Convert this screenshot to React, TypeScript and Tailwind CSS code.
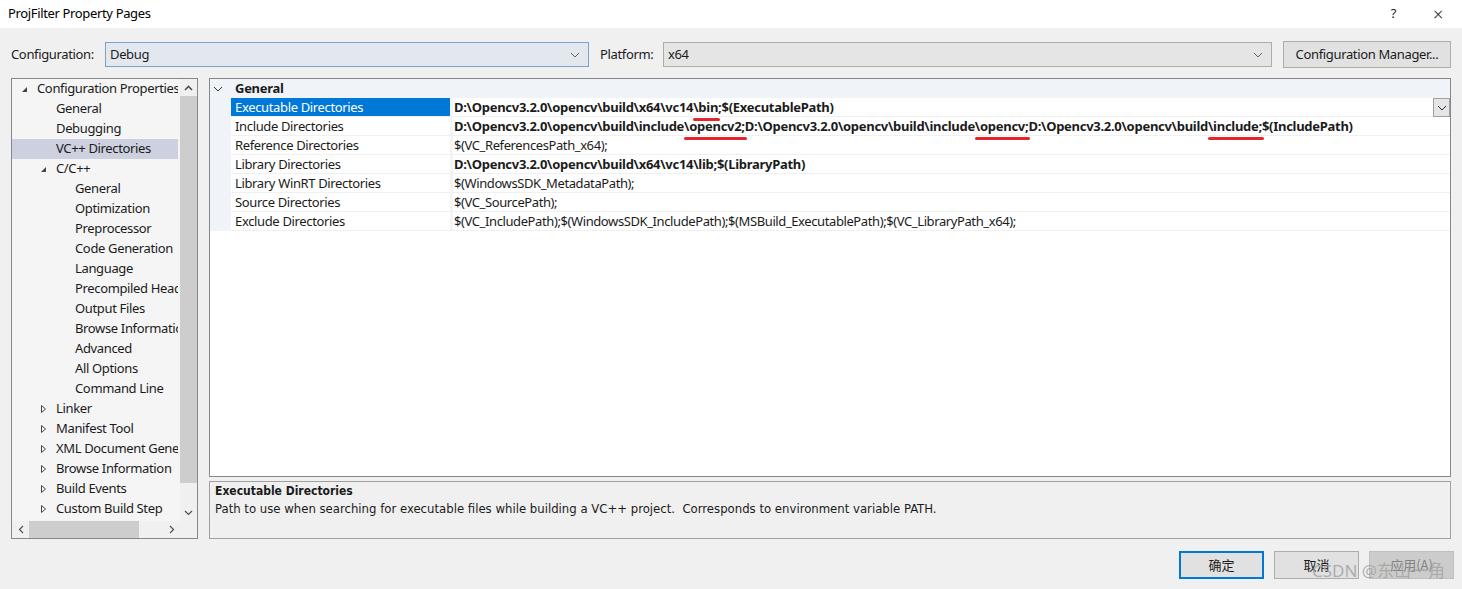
import React from "react";

const FONT = "font-['Noto_Sans','Segoe_UI',sans-serif]";

function Chevron({ className = "" }: { className?: string }) {
  return (
    <svg width="10" height="6" viewBox="0 0 10 6" className={className}>
      <path d="M1 1 L5 5 L9 1" fill="none" stroke="currentColor" strokeWidth="1" />
    </svg>
  );
}

function Expanded() {
  return (
    <svg width="7" height="7" viewBox="0 0 7 7">
      <path d="M6 1 L6 6 L1 6 Z" fill="#444" />
    </svg>
  );
}

function Collapsed() {
  return (
    <svg width="7" height="10" viewBox="0 0 7 10">
      <path d="M1.5 1.5 L5.5 5 L1.5 8.5 Z" fill="none" stroke="#444" strokeWidth="1" />
    </svg>
  );
}

type TreeItem = { label: string; level: number; state?: "open" | "closed"; selected?: boolean };

const tree: TreeItem[] = [
  { label: "Configuration Properties", level: 0, state: "open" },
  { label: "General", level: 1 },
  { label: "Debugging", level: 1 },
  { label: "VC++ Directories", level: 1, selected: true },
  { label: "C/C++", level: 1, state: "open" },
  { label: "General", level: 2 },
  { label: "Optimization", level: 2 },
  { label: "Preprocessor", level: 2 },
  { label: "Code Generation", level: 2 },
  { label: "Language", level: 2 },
  { label: "Precompiled Headers", level: 2 },
  { label: "Output Files", level: 2 },
  { label: "Browse Information", level: 2 },
  { label: "Advanced", level: 2 },
  { label: "All Options", level: 2 },
  { label: "Command Line", level: 2 },
  { label: "Linker", level: 1, state: "closed" },
  { label: "Manifest Tool", level: 1, state: "closed" },
  { label: "XML Document Generator", level: 1, state: "closed" },
  { label: "Browse Information", level: 1, state: "closed" },
  { label: "Build Events", level: 1, state: "closed" },
  { label: "Custom Build Step", level: 1, state: "closed" },
];

function U({ children }: { children: React.ReactNode }) {
  return (
    <span className="relative">
      {children}
      <span className="absolute left-[0px] right-[-2px] bottom-[-5px] h-[3px] rounded-full bg-[#e3262d]" />
    </span>
  );
}

const rows: { name: string; bold?: boolean; selected?: boolean; value: React.ReactNode }[] = [
  {
    name: "Executable Directories",
    bold: true,
    selected: true,
    value: (
      <>
        {"D:\\Opencv3.2.0\\opencv\\build\\x64\\vc14"}
        <U>{"\\bin"}</U>
        {";$(ExecutablePath)"}
      </>
    ),
  },
  {
    name: "Include Directories",
    bold: true,
    value: (
      <>
        {"D:\\Opencv3.2.0\\opencv\\build\\include"}
        <U>{"\\opencv2;"}</U>
        {"D:\\Opencv3.2.0\\opencv\\build\\include"}
        <U>{"\\opencv;"}</U>
        {"D:\\Opencv3.2.0\\opencv\\build"}
        <U>{"\\include;"}</U>
        {"$(IncludePath)"}
      </>
    ),
  },
  { name: "Reference Directories", value: "$(VC_ReferencesPath_x64);" },
  { name: "Library Directories", bold: true, value: "D:\\Opencv3.2.0\\opencv\\build\\x64\\vc14\\lib;$(LibraryPath)" },
  { name: "Library WinRT Directories", value: "$(WindowsSDK_MetadataPath);" },
  { name: "Source Directories", value: "$(VC_SourcePath);" },
  {
    name: "Exclude Directories",
    value: "$(VC_IncludePath);$(WindowsSDK_IncludePath);$(MSBuild_ExecutablePath);$(VC_LibraryPath_x64);",
  },
];

export default function App() {
  return (
    <div
      className={`relative w-[1462px] h-[589px] overflow-hidden bg-[#f0f0f0] text-[13px] tracking-[-0.35px] text-[#1b1b1b] ${FONT}`}
    >
      {/* Title bar */}
      <div className="h-[28px] bg-white flex items-center pl-[8px] pr-[19px]">
        <span className="text-[13px] text-[#000]">ProjFilter Property Pages</span>
        <span className="ml-auto text-[13px] text-[#222]">?</span>
        <span className="ml-[37px] text-[18px] font-light leading-none text-[#222]">×</span>
      </div>

      {/* Configuration row */}
      <div className="mt-[14px] flex items-center pl-[11px] h-[25px]">
        <span className="w-[94px]">Configuration:</span>
        <div className="w-[484px] h-[25px] border border-[#7aa2cc] bg-[#e3e8ee] flex items-center pl-[4px] pr-[8px]">
          <span>Debug</span>
          <Chevron className="ml-auto text-[#666]" />
        </div>
        <span className="ml-[11px] w-[63px]">Platform:</span>
        <div className="w-[609px] h-[25px] border border-[#adadad] bg-[#e5e5e5] flex items-center pl-[4px] pr-[8px]">
          <span>x64</span>
          <Chevron className="ml-auto text-[#666]" />
        </div>
        <div className="ml-[11px] w-[168px] h-[27px] border border-[#adadad] bg-[#e1e1e1] flex items-center justify-center">
          Configuration Manager...
        </div>
      </div>

      {/* Main area */}
      <div className="mt-[11px] flex pl-[11px]">
        {/* Tree */}
        <div className="w-[187px] h-[461px] border border-[#828790] bg-[#f5f5f5] flex flex-col">
          <div className="flex flex-1 min-h-0">
            <div className="w-[166px] overflow-hidden">
              {tree.map((t, i) => (
                <div
                  key={i}
                  className={`h-[20px] flex items-center whitespace-nowrap ${t.selected ? "bg-[#cdd0de]" : ""}`}
                >
                  <div
                    className={`flex items-center justify-center w-[11px] shrink-0 ${
                      t.level === 0 ? "ml-[7px] mr-[7px]" : t.level === 1 ? "ml-[26px] mr-[7px]" : "ml-[45px] mr-[7px]"
                    }`}
                  >
                    {t.state === "open" ? <Expanded /> : t.state === "closed" ? <Collapsed /> : null}
                  </div>
                  <span>{t.label}</span>
                </div>
              ))}
            </div>
            {/* vertical scrollbar */}
            <div className="w-[17px] ml-auto bg-[#f0f0f0] flex flex-col items-center">
              <div className="h-[17px] flex items-center justify-center">
                <svg width="9" height="6" viewBox="0 0 9 6">
                  <path d="M1 5 L4.5 1.5 L8 5" fill="none" stroke="#505050" strokeWidth="1.6" />
                </svg>
              </div>
              <div className="w-[17px] h-[387px] bg-[#cdcdcd]" />
              <div className="mt-auto h-[17px] flex items-center justify-center">
                <svg width="9" height="6" viewBox="0 0 9 6">
                  <path d="M1 1 L4.5 4.5 L8 1" fill="none" stroke="#505050" strokeWidth="1.2" />
                </svg>
              </div>
            </div>
          </div>
          {/* horizontal scrollbar */}
          <div className="h-[17px] flex bg-[#f0f0f0]">
            <div className="w-[17px] flex items-center justify-center">
              <svg width="6" height="9" viewBox="0 0 6 9">
                <path d="M5 1 L1.5 4.5 L5 8" fill="none" stroke="#505050" strokeWidth="1.2" />
              </svg>
            </div>
            <div className="w-[110px] bg-[#cdcdcd]" />
            <div className="ml-auto w-[17px] mr-[17px] flex items-center justify-center">
              <svg width="6" height="9" viewBox="0 0 6 9">
                <path d="M1 1 L4.5 4.5 L1 8" fill="none" stroke="#505050" strokeWidth="1.2" />
              </svg>
            </div>
          </div>
        </div>

        {/* Right column */}
        <div className="ml-[11px] w-[1242px] flex flex-col">
          <div className="h-[399px] border border-[#828790] bg-white flex flex-col">
            <div className="h-[19px] bg-[#f0f4f9] flex items-center">
              <div className="w-[22px] flex justify-start pl-[3px]">
                <Chevron className="text-[#333]" />
              </div>
              <span className="ml-[3px] font-bold tracking-[-0.28px]">General</span>
            </div>
            {rows.map((r, i) => (
              <div key={i} className="h-[19px] flex">
                <div className="w-[21px] bg-[#f0f4f9]" />
                <div
                  className={`w-[219px] pl-[4px] pt-[1px] flex items-center border-b border-[#f0f0f0] ${
                    r.selected ? "bg-[#0078d7] text-white border-[#0078d7]" : ""
                  }`}
                >
                  {r.name}
                </div>
                <div className="w-[3px] border-b border-[#f0f0f0] bg-[#f4f4f4]" />
                <div
                  className={`flex-1 pl-[1px] pt-[1px] flex items-center whitespace-nowrap border-b border-[#f0f0f0] ${
                    r.bold ? "font-bold tracking-[-0.28px]" : "tracking-[-0.4px]"
                  }`}
                >
                  <span>{r.value}</span>
                  {r.selected && (
                    <div className="ml-auto w-[17px] h-[19px] border border-[#a0a0a0] bg-[#e5e5e5] flex items-center justify-center">
                      <Chevron className="text-[#333]" />
                    </div>
                  )}
                </div>
              </div>
            ))}
          </div>
          <div className="mt-[4px] h-[58px] border border-[#a0a0a0] bg-[#f0f0f0] pl-[5px] font-['DejaVu_Sans_Condensed','Liberation_Sans',sans-serif] tracking-normal leading-[18px]">
            <div className="font-bold text-[12px]">Executable Directories</div>
            <div className="text-[13px]">
              Path to use when searching for executable files while building a VC++ project.&nbsp; Corresponds to environment variable PATH.
            </div>
          </div>
        </div>
      </div>

      {/* Buttons */}
      <div className="mt-[12px] flex justify-end pr-[8px] gap-[10px] tracking-normal">
        <div className="w-[85px] h-[28px] border-2 border-[#0078d7] bg-[#e1e1e1] flex items-center justify-center font-['Noto_Sans_CJK_SC',sans-serif]">
          确定
        </div>
        <div className="w-[85px] h-[28px] border border-[#adadad] bg-[#e1e1e1] flex items-center justify-center font-['Noto_Sans_CJK_SC',sans-serif]">
          取消
        </div>
        <div className="w-[85px] h-[28px] border border-[#bfbfbf] bg-[#cccccc] text-[#838383] flex items-center justify-center font-['Noto_Sans_CJK_SC',sans-serif]">
          应用(A)
        </div>
      </div>

      {/* Watermark */}
      <div className="absolute left-[1312px] top-[558px] text-[17px] tracking-normal text-[#a0a0a0]/80 font-['Noto_Sans','Noto_Sans_CJK_SC',sans-serif] whitespace-nowrap">
        CSDN @东山一角
      </div>
    </div>
  );
}
